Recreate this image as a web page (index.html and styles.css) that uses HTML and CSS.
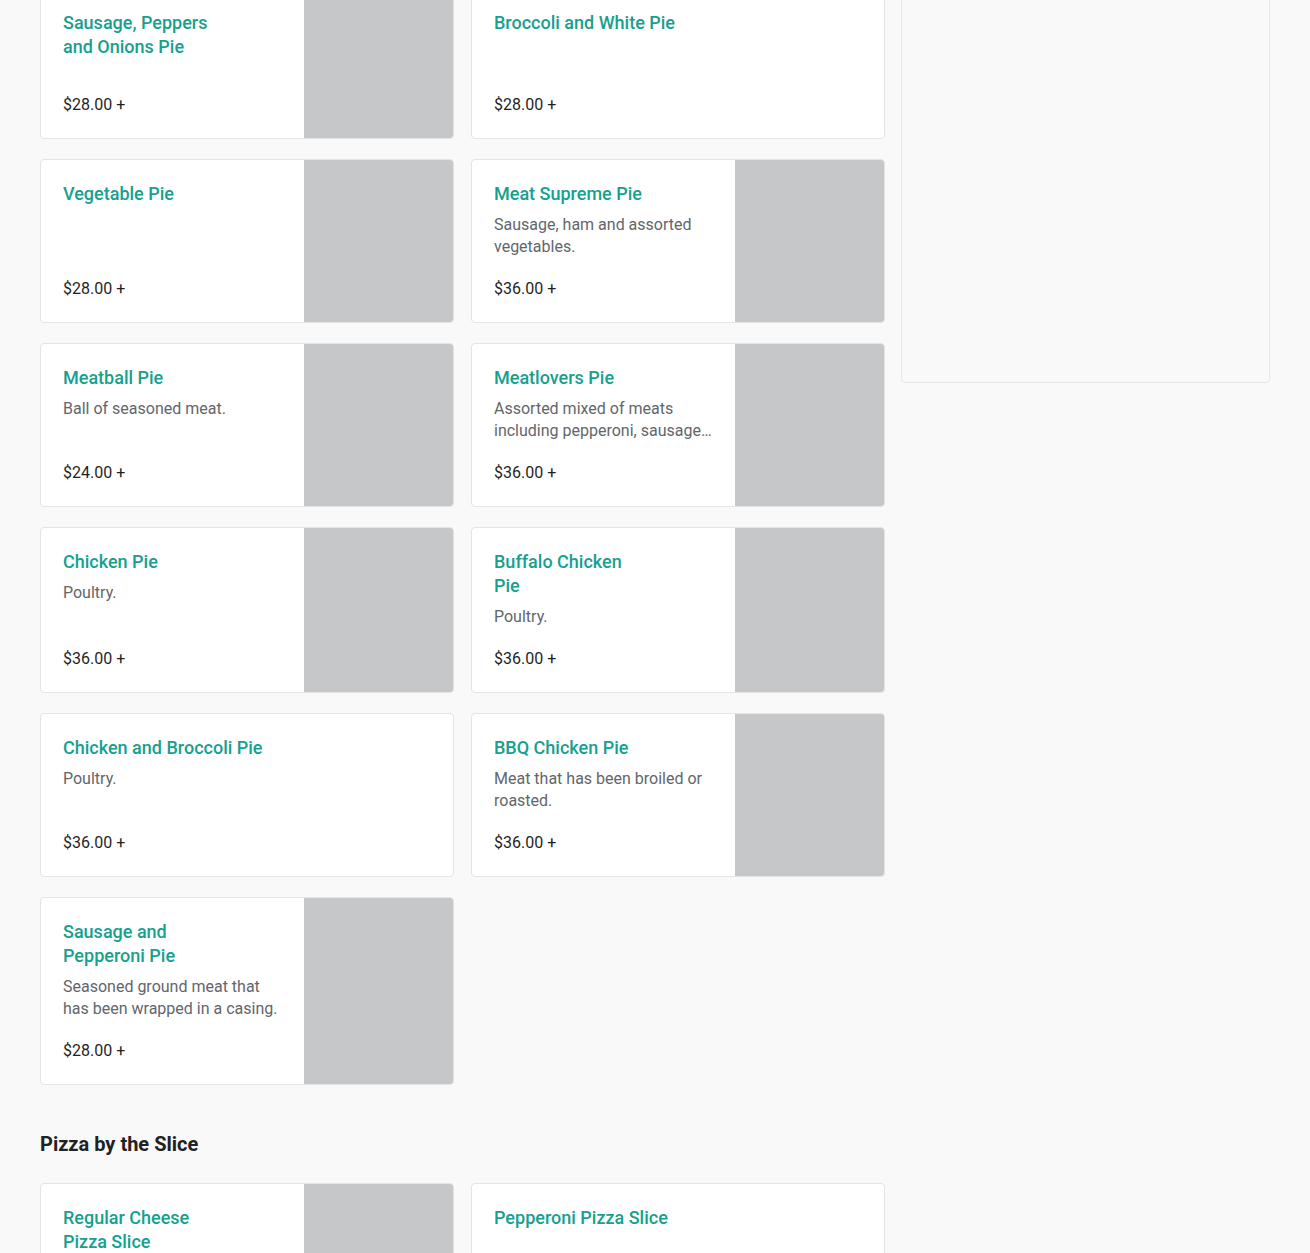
FILE: index.html
```html
<!DOCTYPE html>
<html lang="en">
<head>
<meta charset="utf-8">
<title>Menu</title>
<link rel="stylesheet" href="styles.css">
</head>
<body>
<div class="page">
  <main class="menu">
    <section class="category">
      <div class="grid">
        <div class="card">
          <div class="info">
            <h3 class="title narrow">Sausage, Peppers and Onions Pie</h3>
            <div class="price">$28.00 +</div>
          </div>
          <div class="thumb"></div>
        </div>
        <div class="card">
          <div class="info">
            <h3 class="title">Broccoli and White Pie</h3>
            <div class="price">$28.00 +</div>
          </div>
        </div>
        <div class="card">
          <div class="info">
            <h3 class="title narrow">Vegetable Pie</h3>
            <div class="price">$28.00 +</div>
          </div>
          <div class="thumb"></div>
        </div>
        <div class="card">
          <div class="info">
            <h3 class="title narrow">Meat Supreme Pie</h3>
            <p class="desc">Sausage, ham and assorted vegetables.</p>
            <div class="price">$36.00 +</div>
          </div>
          <div class="thumb"></div>
        </div>
        <div class="card">
          <div class="info">
            <h3 class="title narrow">Meatball Pie</h3>
            <p class="desc">Ball of seasoned meat.</p>
            <div class="price">$24.00 +</div>
          </div>
          <div class="thumb"></div>
        </div>
        <div class="card">
          <div class="info">
            <h3 class="title narrow">Meatlovers Pie</h3>
            <p class="desc">Assorted mixed of meats including pepperoni, sausage, ham, meatball and bacon.</p>
            <div class="price">$36.00 +</div>
          </div>
          <div class="thumb"></div>
        </div>
        <div class="card">
          <div class="info">
            <h3 class="title narrow">Chicken Pie</h3>
            <p class="desc">Poultry.</p>
            <div class="price">$36.00 +</div>
          </div>
          <div class="thumb"></div>
        </div>
        <div class="card">
          <div class="info">
            <h3 class="title narrow">Buffalo Chicken Pie</h3>
            <p class="desc">Poultry.</p>
            <div class="price">$36.00 +</div>
          </div>
          <div class="thumb"></div>
        </div>
        <div class="card">
          <div class="info">
            <h3 class="title">Chicken and Broccoli Pie</h3>
            <p class="desc">Poultry.</p>
            <div class="price">$36.00 +</div>
          </div>
        </div>
        <div class="card">
          <div class="info">
            <h3 class="title narrow">BBQ Chicken Pie</h3>
            <p class="desc">Meat that has been broiled or roasted.</p>
            <div class="price">$36.00 +</div>
          </div>
          <div class="thumb"></div>
        </div>
        <div class="card">
          <div class="info">
            <h3 class="title narrow">Sausage and Pepperoni Pie</h3>
            <p class="desc">Seasoned ground meat that has been wrapped in a casing.</p>
            <div class="price">$28.00 +</div>
          </div>
          <div class="thumb"></div>
        </div>
      </div>
    </section>
    <section class="category">
      <h2 class="cat-title">Pizza by the Slice</h2>
      <div class="grid">
        <div class="card">
          <div class="info">
            <h3 class="title narrow">Regular Cheese Pizza Slice</h3>
            <div class="price">$4.00 +</div>
          </div>
          <div class="thumb"></div>
        </div>
        <div class="card">
          <div class="info">
            <h3 class="title">Pepperoni Pizza Slice</h3>
            <div class="price">$4.50 +</div>
          </div>
        </div>
      </div>
    </section>
  </main>
  <aside class="sidebar"></aside>
</div>
</body>
</html>
```
FILE: styles.css
```css
* { box-sizing: border-box; }
html, body { margin: 0; padding: 0; }
body {
  background: #f9f9f9;
  font-family: Roboto, "Liberation Sans", Arial, sans-serif;
  color: #1f1f1f;
}
.page {
  display: flex;
  align-items: flex-start;
  gap: 16px;
  padding: 0 40px;
  margin-top: -12px;
}
.menu {
  width: 845px;
  flex: none;
}
.sidebar {
  width: 369px;
  height: 395px;
  flex: none;
  border: 1px solid #e6e6e6;
  border-radius: 4px;
  background: #f9f9f9;
}
.grid {
  display: grid;
  grid-template-columns: 1fr 1fr;
  column-gap: 17px;
  row-gap: 20px;
}
.card {
  display: flex;
  min-height: 151px;
  background: #fff;
  border: 1px solid #e4e4e4;
  border-radius: 4px;
  overflow: hidden;
}
.info {
  flex: 1;
  min-width: 0;
  display: flex;
  flex-direction: column;
  padding: 22px 22px 21px 22px;
}
.thumb {
  width: 149px;
  flex: none;
  background: #c6c7c8;
}
.title {
  margin: 0;
  font-size: 18px;
  line-height: 24px;
  font-weight: 500;
  color: #17a08f;
}
.title.narrow { max-width: 152px; }
.desc {
  margin: 8px 0 0;
  font-size: 16px;
  line-height: 22px;
  color: #62666b;
  display: -webkit-box;
  -webkit-line-clamp: 2;
  -webkit-box-orient: vertical;
  overflow: hidden;
}
.price {
  margin-top: auto;
  padding-top: 19px;
  font-size: 16px;
  line-height: 24px;
  color: #1f1f1f;
}
.cat-title {
  margin: 47px 0 27px;
  font-size: 20px;
  line-height: 24px;
  font-weight: 700;
  color: #222;
}
```
